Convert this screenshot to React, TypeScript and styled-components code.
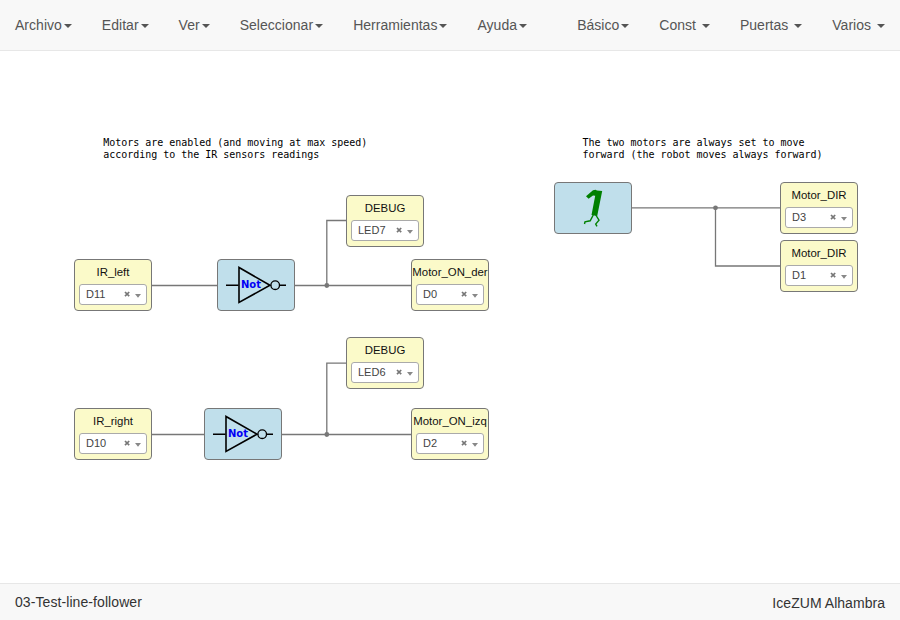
import React from "react";
import styled, { createGlobalStyle } from "styled-components";

const GlobalStyle = createGlobalStyle`
  * { box-sizing: border-box; }
  body {
    margin: 0;
    background: #fff;
    color: #333;
    font: 14px/20px "Liberation Sans", Arial, sans-serif;
  }
`;

const Page = styled.div`
  display: flex;
  flex-direction: column;
  height: 100vh;
  overflow: hidden;
`;

const Navbar = styled.nav`
  display: flex;
  justify-content: space-between;
  flex: 0 0 51px;
  background: #f8f8f8;
  border-bottom: 1px solid #e7e7e7;
`;

const MenuGroup = styled.div`
  display: flex;
`;

const MenuLink = styled.a`
  padding: 15px;
  color: #555;
  letter-spacing: 0.025px;
  white-space: pre;
`;

const Caret = styled.span`
  display: inline-block;
  margin-left: 2px;
  vertical-align: middle;
  border-top: 4px solid #555;
  border-right: 4px solid transparent;
  border-left: 4px solid transparent;
`;

const Canvas = styled.main`
  position: relative;
  flex: 1;
  overflow: hidden;
`;

const Wires = styled.svg`
  position: absolute;
  inset: 0;
`;

const Note = styled.p<{ $x: number; $y: number }>`
  position: absolute;
  left: ${(p) => p.$x}px;
  top: ${(p) => p.$y}px;
  margin: 0;
  color: #000;
  font: 10px/12px "DejaVu Sans Mono", monospace;
  letter-spacing: -0.02px;
  white-space: pre;
`;

const Block = styled.div<{ $x: number; $y: number; $fill: string }>`
  position: absolute;
  left: ${(p) => p.$x}px;
  top: ${(p) => p.$y}px;
  width: 78px;
  height: 52px;
  display: flex;
  flex-direction: column;
  align-items: center;
  background: ${(p) => p.$fill};
  border: 1px solid #777;
  border-radius: 4px;
`;

const BlockLabel = styled.div`
  height: 24px;
  color: #111;
  font-size: 11.4px;
  line-height: 24px;
  white-space: nowrap;
`;

const PinSelect = styled.div`
  display: flex;
  width: 68px;
  height: 21px;
  padding: 0 5px 0 6px;
  background: #fff;
  border: 1px solid #aaa;
  border-radius: 3px;
  color: #444;
  font-size: 11px;
  line-height: 18px;
`;

const PinName = styled.span`
  flex: 1;
`;

const PinIcons = styled.svg`
  width: 17px;
  height: 19px;
`;

const BlockDrawing = styled.svg`
  width: 76px;
  height: 50px;
`;

const StatusBar = styled.footer`
  display: flex;
  justify-content: space-between;
  flex: 0 0 37px;
  padding: 8px 15px 7px;
  background: #f8f8f8;
  border-top: 1px solid #e7e7e7;
`;

const ProjectName = styled.span`
  letter-spacing: 0.08px;
`;

const BoardName = styled.span`
  padding-top: 1px;
  letter-spacing: 0.04px;
`;

const leftMenus = ["Archivo", "Editar", "Ver", "Seleccionar", "Herramientas", "Ayuda"];
const rightMenus = ["Básico", "Const ", "Puertas ", "Varios "];

const pins = [
  { label: "IR_left", pin: "D11", x: 74, y: 208 },
  { label: "DEBUG", pin: "LED7", x: 346, y: 144 },
  { label: "Motor_ON_der", pin: "D0", x: 411, y: 208 },
  { label: "IR_right", pin: "D10", x: 74, y: 357 },
  { label: "DEBUG", pin: "LED6", x: 346, y: 286 },
  { label: "Motor_ON_izq", pin: "D2", x: 411, y: 357 },
  { label: "Motor_DIR", pin: "D3", x: 780, y: 131 },
  { label: "Motor_DIR", pin: "D1", x: 780, y: 189 },
];

function Menus({ items }: { items: string[] }) {
  return (
    <MenuGroup>
      {items.map((item) => (
        <MenuLink key={item}>{item}<Caret /></MenuLink>
      ))}
    </MenuGroup>
  );
}

function PinBlock({ label, pin, x, y }: (typeof pins)[number]) {
  return (
    <Block $x={x} $y={y} $fill="#fbfac9">
      <BlockLabel>{label}</BlockLabel>
      <PinSelect>
        <PinName>{pin}</PinName>
        <PinIcons viewBox="0 0 17 19">
          <path d="M1 7 L5.2 11.2 M5.2 7 L1 11.2" stroke="#777" strokeWidth="1.7" />
          <path d="M11 9 H17 L14 12.8 Z" fill="#888" />
        </PinIcons>
      </PinSelect>
    </Block>
  );
}

function NotBlock({ x, y }: { x: number; y: number }) {
  return (
    <Block $x={x} $y={y} $fill="#c0dfeb">
      <BlockDrawing viewBox="0 0 76 50" fill="none" stroke="#000">
        <path d="M8 25.2 H20.5 M61.5 25.2 H68" strokeWidth="1.4" />
        <path d="M21 7.5 V42.5 L52 25.2 Z" strokeWidth="1.6" />
        <circle cx="57.2" cy="25.2" r="4.3" strokeWidth="1.3" />
        <text x="23" y="28" fill="#0000f5" stroke="none" fontFamily="DejaVu Sans" fontWeight="700" fontSize="11.2" textLength="20" lengthAdjust="spacingAndGlyphs">Not</text>
      </BlockDrawing>
    </Block>
  );
}

function OneBlock() {
  return (
    <Block $x={554} $y={131} $fill="#c0dfeb">
      <BlockDrawing viewBox="0 0 76 50">
        <path d="M31 13.2 L38 7.2 L40.5 6.8 L42 7.6 L47.2 8 L42.2 33 L36.5 32 L40.2 12.8 L38 12.6 L33.6 15.8 Z" fill="#008000" />
        <path d="M38.3 32 L35.2 37.8 L30 38.8 L29.5 41 M40.8 32 L44 37.2 L40.7 41 L42 43.3" fill="none" stroke="#008000" strokeWidth="1.4" />
      </BlockDrawing>
    </Block>
  );
}

export default function App() {
  return (
    <Page>
      <GlobalStyle />
      <Navbar>
        <Menus items={leftMenus} />
        <Menus items={rightMenus} />
      </Navbar>
      <Canvas>
        <Wires width="900" height="532" fill="none" stroke="#777" strokeWidth="1.3">
          <path d="M151 234.5 H218 M294 234.5 H412 M326.8 234.5 V169.5 H347" />
          <path d="M151 383.5 H205 M281 383.5 H412 M326.8 383.5 V312.2 H347" />
          <path d="M631 156.8 H781 M715.5 156.8 V215 H781" />
          <g fill="#777" stroke="none">
            <circle cx="326.8" cy="234.5" r="2.4" />
            <circle cx="326.8" cy="383.5" r="2.4" />
            <circle cx="715.5" cy="156.8" r="2.4" />
          </g>
        </Wires>
        <Note $x={103.3} $y={86}>{"Motors are enabled (and moving at max speed)\naccording to the IR sensors readings"}</Note>
        <Note $x={582.5} $y={86}>{"The two motors are always set to move\nforward (the robot moves always forward)"}</Note>
        {pins.map((p) => (
          <PinBlock key={p.label + p.pin} {...p} />
        ))}
        <NotBlock x={217} y={208} />
        <NotBlock x={204} y={357} />
        <OneBlock />
      </Canvas>
      <StatusBar>
        <ProjectName>03-Test-line-follower</ProjectName>
        <BoardName>IceZUM Alhambra</BoardName>
      </StatusBar>
    </Page>
  );
}
